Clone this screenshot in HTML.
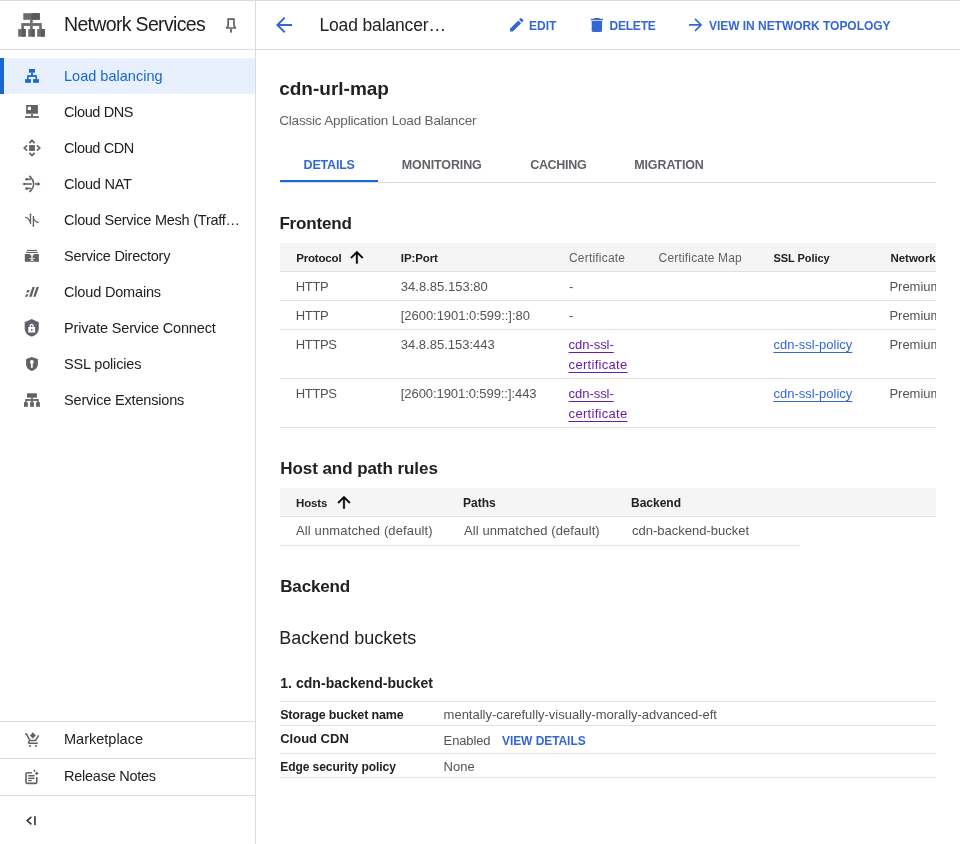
<!DOCTYPE html>
<html><head><meta charset="utf-8"><style>
html,body{margin:0;padding:0;width:960px;height:844px;overflow:hidden;background:#fff;font-family:"Liberation Sans",sans-serif;}
.t{position:absolute;white-space:nowrap;line-height:normal;}
.bm{display:inline-block;width:0;height:0;vertical-align:baseline;}
.a{position:absolute;}
</style></head><body>
<!-- top line -->
<div class="a" style="left:0;top:0;width:960px;height:1px;background:#dadce0"></div>
<!-- header bottom line -->
<div class="a" style="left:0;top:49px;width:960px;height:1px;background:#dadce0"></div>
<!-- sidebar right border -->
<div class="a" style="left:255px;top:0;width:1px;height:844px;background:#dadce0"></div>
<!-- active item -->
<div class="a" style="left:0;top:58px;width:255px;height:36px;background:#e8f0fe"></div>
<div class="a" style="left:0;top:58px;width:4px;height:36px;background:#1967d2"></div>
<!-- bottom sidebar lines -->
<div class="a" style="left:0;top:721px;width:255px;height:1px;background:#dadce0"></div>
<div class="a" style="left:0;top:758px;width:255px;height:1px;background:#dadce0"></div>
<div class="a" style="left:0;top:795px;width:255px;height:1px;background:#dadce0"></div>
<!-- tabs -->
<div class="a" style="left:280px;top:182px;width:656px;height:1px;background:#dadce0"></div>
<div class="a" style="left:280px;top:180px;width:98px;height:2px;background:#1967d2"></div>
<!-- frontend table -->
<div class="a" style="left:280px;top:243px;width:656px;height:28px;background:#f5f5f5"></div>
<div class="a" style="left:280px;top:271px;width:656px;height:1px;background:#e0e0e0"></div>
<div class="a" style="left:280px;top:300px;width:656px;height:1px;background:#e0e0e0"></div>
<div class="a" style="left:280px;top:329px;width:656px;height:1px;background:#e0e0e0"></div>
<div class="a" style="left:280px;top:378px;width:656px;height:1px;background:#e0e0e0"></div>
<div class="a" style="left:280px;top:427px;width:656px;height:1px;background:#e0e0e0"></div>
<!-- host table -->
<div class="a" style="left:280px;top:488px;width:656px;height:28px;background:#f5f5f5"></div>
<div class="a" style="left:280px;top:516px;width:656px;height:1px;background:#e0e0e0"></div>
<div class="a" style="left:280px;top:545px;width:520px;height:1px;background:#e0e0e0"></div>
<!-- backend kv -->
<div class="a" style="left:280px;top:701px;width:656px;height:1px;background:#e0e0e0"></div>
<div class="a" style="left:280px;top:725px;width:656px;height:1px;background:#e0e0e0"></div>
<div class="a" style="left:280px;top:753px;width:656px;height:1px;background:#e0e0e0"></div>
<div class="a" style="left:280px;top:777px;width:656px;height:1px;background:#e0e0e0"></div>

<svg class="a" style="left:0;top:0" width="960" height="844" viewBox="0 0 960 844">
<!-- header network services icon -->
<g fill="#6b6b6b">
<rect x="23.3" y="13.2" width="16.5" height="6.6"/>
<rect x="30.1" y="19.7" width="2.6" height="3.5"/>
<rect x="21.3" y="23.1" width="20.5" height="2.8"/>
<rect x="21.3" y="25.8" width="2.6" height="3.4"/>
<rect x="30.1" y="25.8" width="2.6" height="3.4"/>
<rect x="39.2" y="25.8" width="2.6" height="3.4"/>
<rect x="18.2" y="29.1" width="7.5" height="7.6"/>
<rect x="28.2" y="29.1" width="6.5" height="7.6"/>
<rect x="37.2" y="29.1" width="7.6" height="7.6"/>
</g>
<g fill="#5a5a5a">
<rect x="31.5" y="13.2" width="8.3" height="6.6"/>
<rect x="21.8" y="29.1" width="3.9" height="7.6"/>
<rect x="31.5" y="29.1" width="3.2" height="7.6"/>
<rect x="41" y="29.1" width="3.8" height="7.6"/>
</g>
<!-- pin -->
<path d="M227.3 18.3 H234.8 V25.5 L236.1 27.3 V28.8 H226 V27.3 L227.3 25.5 Z M229 20 V25.9 L228.1 27.2 H234 L233.1 25.9 V20 Z" fill="#5f6368" fill-rule="evenodd"/>
<rect x="230.1" y="28.7" width="1.8" height="3.9" fill="#5f6368"/>
<!-- load balancing (blue) -->
<g fill="#1967d2">
<rect x="29" y="69" width="5.9" height="3.7"/>
<rect x="31.1" y="72.6" width="1.8" height="2.6"/>
<rect x="27.1" y="75.1" width="9.8" height="1.8"/>
<rect x="27.1" y="76.8" width="1.6" height="2.4"/>
<rect x="35.3" y="76.8" width="1.6" height="2.4"/>
<rect x="25.1" y="79.1" width="5.8" height="3.7"/>
<rect x="33.1" y="79.1" width="5.8" height="3.7"/>
</g>
<!-- cloud dns -->
<g fill="#5f6368">
<path d="M26.1 105.1h11.8v8.7H26.1zM27.8 106.8v3.3h3.2v-3.3z" fill-rule="evenodd"/>
<rect x="31.1" y="113.7" width="1.8" height="2.5"/>
<rect x="25.1" y="116.1" width="13.8" height="1.8"/>
</g>
<!-- cloud cdn -->
<g fill="none" stroke="#5f6368" stroke-width="1.7" stroke-linejoin="miter">
<polyline points="29.4,143.1 32,140.3 34.6,143.1"/>
<polyline points="29.4,152.8 32,155.6 34.6,152.8"/>
<polyline points="27.1,145.4 24.3,148 27.1,150.6"/>
<polyline points="36.9,145.4 39.7,148 36.9,150.6"/>
</g>
<rect x="29.1" y="145.1" width="5.8" height="5.8" fill="#5f6368"/>
<!-- cloud nat -->
<g fill="none" stroke="#5f6368" stroke-width="1.6">
<path d="M29.4 175.8 Q 37.9 184 29.4 192"/>
<line x1="24.5" y1="184" x2="31.8" y2="184"/>
<line x1="27" y1="179.2" x2="30.8" y2="179.4"/>
<line x1="27" y1="188.6" x2="30.8" y2="188.3"/>
<line x1="35" y1="184" x2="38.5" y2="184"/>
</g>
<g fill="#5f6368">
<circle cx="24.3" cy="184" r="1.3"/>
<circle cx="26.5" cy="179.2" r="1.3"/>
<circle cx="26.5" cy="188.6" r="1.3"/>
<path d="M37.6 181.8 L40.5 184 L37.6 186.2z"/>
</g>
<!-- cloud service mesh -->
<g fill="none" stroke="#5f6368" stroke-width="1.3">
<line x1="30.5" y1="214" x2="30.5" y2="224.2"/>
<line x1="33.4" y1="216" x2="33.4" y2="226"/>
<path d="M25.2 217.4 Q 28.5 217.6 30.5 222.5"/>
<path d="M33.4 218.3 Q 35.5 222.5 38.7 222.5"/>
</g>
<g fill="#5f6368">
<path d="M29.2 214.8 L30.5 213.2 L31.8 214.8z"/>
<path d="M32.1 225.4 L33.4 227 L34.7 225.4z"/>
</g>
<!-- service directory -->
<g fill="#5f6368">
<rect x="27.1" y="249.9" width="9.8" height="1.1"/>
<rect x="26" y="251.9" width="11.9" height="1.1"/>
<path d="M24.8 254h14.1v7.8H24.8z"/>
</g>
<g fill="#fff" opacity="0.85">
<path d="M29.6 254 h4.8 l-1.6 2 h-1.6z"/>
<rect x="31.3" y="256" width="1.4" height="4.6"/>
<rect x="29.3" y="258" width="5.4" height="0.9"/>
<rect x="30.2" y="260" width="3.6" height="0.8"/>
</g>
<!-- cloud domains -->
<g fill="#5f6368">
<path d="M27.3 290.1 h2.6 l-1.1 2.4 h-2.6z"/>
<path d="M26.2 294.2 h2.2 l-1.1 2.6 h-2.4z"/>
<path d="M32.4 287.1 h2.4 l-3.1 9.7 h-2.6z"/>
<path d="M36.5 287.1 h2.4 l-3.3 9.7 h-2.4z"/>
</g>
<!-- private service connect -->
<path d="M31.7 319 L24.7 322.2 V328.5 C24.7 332.5 27.7 335.7 31.7 336.6 C35.7 335.7 38.8 332.5 38.8 328.5 V322.2z" fill="#5f6368"/>
<g fill="#fff">
<rect x="28.3" y="327.1" width="6.8" height="5.5" rx="0.3"/>
<path d="M29.6 327.4 V325.8 A2.1 2.1 0 0 1 33.8 325.8 V327.4 h-1.3 V325.8 A0.8 0.8 0 0 0 30.9 325.8 V327.4z"/>
</g>
<path d="M31.2 328.6 L33 329.9 L31.2 331.2z" fill="#5f6368"/>
<!-- ssl policies -->
<path d="M31.8 357 L26.1 359.1 V364 C26.1 367.3 28.6 370.1 31.8 370.9 C35 370.1 37.9 367.3 37.9 364 V359.1z" fill="#5f6368"/>
<g fill="#fff">
<circle cx="31.85" cy="362" r="1.9"/>
<rect x="30.95" y="362" width="1.8" height="5.8"/>
</g>
<!-- service extensions -->
<g fill="#5f6368">
<rect x="27" y="393.3" width="9.9" height="4.3"/>
<rect x="31.1" y="397.5" width="1.8" height="2"/>
<rect x="25.1" y="399.1" width="13.7" height="1.8"/>
<rect x="25.1" y="400.8" width="1.7" height="1.5"/>
<rect x="31.1" y="400.8" width="1.8" height="1.5"/>
<rect x="37.1" y="400.8" width="1.7" height="1.5"/>
<rect x="24" y="402.2" width="3.8" height="4.6"/>
<rect x="30.1" y="402.2" width="3.8" height="4.6"/>
<rect x="36.1" y="402.2" width="3.8" height="4.6"/>
</g>
<!-- marketplace -->
<g fill="none" stroke="#5f6368" stroke-width="1.5" stroke-linejoin="round">
<path d="M25.1 734.1 h1.5 l3.1 6.3 h5.9 l3 -5"/>
<path d="M29.4 741 l-0.8 1.2 q-0.5 1 0.6 1 h8.6"/>
</g>
<g fill="#5f6368">
<circle cx="30.1" cy="746" r="1.05"/>
<circle cx="35.9" cy="746" r="1.05"/>
<path d="M32.9 732.3 L35.9 735.4 L32.9 738.5 L29.9 735.4z"/>
</g>
<!-- release notes -->
<g fill="none" stroke="#5f6368" stroke-width="1.6">
<path d="M31.8 772.7 H27.4 q-1.4 0 -1.4 1.4 V782 q0 1.4 1.4 1.4 H35.4 q1.4 0 1.4 -1.4 V777.1"/>
</g>
<g fill="#5f6368">
<rect x="28.2" y="775" width="6.3" height="1.2"/>
<rect x="28.2" y="776.2" width="6.3" height="1.6" opacity="0.45"/>
<rect x="28.2" y="777.9" width="6.3" height="1.2"/>
<rect x="28.2" y="780" width="3.6" height="1.2"/>
<path d="M36.8 771.3 L37.6 772.6 L38.9 773.4 L37.6 774.2 L36.8 775.5 L36 774.2 L34.7 773.4 L36 772.6z"/>
<ellipse cx="34.4" cy="770.7" rx="0.8" ry="1.2"/>
</g>
<!-- collapse -->
<polyline points="31.4,816.8 27.2,820.6 31.4,824.4" fill="none" stroke="#3c4043" stroke-width="1.7"/>
<rect x="34.1" y="816.2" width="1.7" height="8.9" fill="#3c4043"/>
<!-- back arrow -->
<path transform="translate(272,12.9)" d="M20 11H7.83l5.59-5.59L12 4l-8 8 8 8 1.41-1.41L7.83 13H20v-2z" fill="#3367d6"/>
<!-- edit pencil -->
<path transform="translate(507.75,15.75) scale(0.75)" d="M3 17.25V21h3.75L17.81 9.94l-3.75-3.75L3 17.25zM20.71 7.04c.39-.39.39-1.02 0-1.41l-2.34-2.34c-.39-.39-1.02-.39-1.41 0l-1.83 1.83 3.75 3.75 1.83-1.83z" fill="#3367d6"/>
<!-- delete trash -->
<path transform="translate(586.5,15.56) scale(0.864,0.78)" d="M6 19c0 1.1.9 2 2 2h8c1.1 0 2-.9 2-2V7H6v12zM19 4h-3.5l-1-1h-5l-1 1H5v2h14V4z" fill="#3367d6"/>
<!-- forward arrow -->
<path transform="translate(685.6,14.95) scale(0.833)" d="M12 4l-1.41 1.41L16.17 11H4v2h12.17l-5.58 5.59L12 20l8-8z" fill="#3367d6"/>
<!-- sort arrows -->
<path transform="translate(347.4,247.8) scale(0.79)" d="M4 12l1.41 1.41L11 7.83V20h2V7.83l5.58 5.59L20 12l-8-8-8 8z" fill="#000" stroke="#000" stroke-width="0.45"/>
<path transform="translate(334.5,492.8) scale(0.79)" d="M4 12l1.41 1.41L11 7.83V20h2V7.83l5.58 5.59L20 12l-8-8-8 8z" fill="#000" stroke="#000" stroke-width="0.45"/>
</svg>

<div class="a" style="left:0;top:0;width:936px;height:844px;overflow:hidden;will-change:transform">
<span class="t" id="t0" style="left:64.00px;top:13.00px;font-size:19.5px;font-weight:400;color:#202124;letter-spacing:-0.667px;">Network Services<i class="bm"></i></span><span class="t" id="t1" style="left:319.40px;top:15.00px;font-size:17.5px;font-weight:400;color:#202124;letter-spacing:-0.138px;">Load balancer…<i class="bm"></i></span><span class="t" id="t2" style="left:529.00px;top:19.00px;font-size:12px;font-weight:700;color:#3367d6;">EDIT<i class="bm"></i></span><span class="t" id="t3" style="left:609.60px;top:19.00px;font-size:12px;font-weight:700;color:#3367d6;letter-spacing:-0.240px;">DELETE<i class="bm"></i></span><span class="t" id="t4" style="left:709.00px;top:19.00px;font-size:12px;font-weight:700;color:#3367d6;letter-spacing:-0.039px;">VIEW IN NETWORK TOPOLOGY<i class="bm"></i></span><span class="t" id="t5" style="left:64.00px;top:68.00px;font-size:14.5px;font-weight:400;color:#1967d2;letter-spacing:0.015px;">Load balancing<i class="bm"></i></span><span class="t" id="t6" style="left:64.00px;top:104.00px;font-size:14.5px;font-weight:400;color:#202124;letter-spacing:-0.375px;">Cloud DNS<i class="bm"></i></span><span class="t" id="t7" style="left:64.00px;top:140.00px;font-size:14.5px;font-weight:400;color:#202124;letter-spacing:-0.375px;">Cloud CDN<i class="bm"></i></span><span class="t" id="t8" style="left:64.00px;top:176.00px;font-size:14.5px;font-weight:400;color:#202124;letter-spacing:-0.237px;">Cloud NAT<i class="bm"></i></span><span class="t" id="t9" style="left:64.00px;top:212.00px;font-size:14.5px;font-weight:400;color:#202124;letter-spacing:-0.240px;">Cloud Service Mesh (Traff…<i class="bm"></i></span><span class="t" id="t10" style="left:64.00px;top:248.00px;font-size:14.5px;font-weight:400;color:#202124;letter-spacing:-0.250px;">Service Directory<i class="bm"></i></span><span class="t" id="t11" style="left:64.00px;top:284.00px;font-size:14.5px;font-weight:400;color:#202124;letter-spacing:-0.167px;">Cloud Domains<i class="bm"></i></span><span class="t" id="t12" style="left:64.00px;top:320.00px;font-size:14.5px;font-weight:400;color:#202124;letter-spacing:-0.173px;">Private Service Connect<i class="bm"></i></span><span class="t" id="t13" style="left:64.00px;top:356.00px;font-size:14.5px;font-weight:400;color:#202124;letter-spacing:-0.164px;">SSL policies<i class="bm"></i></span><span class="t" id="t14" style="left:64.00px;top:392.00px;font-size:14.5px;font-weight:400;color:#202124;letter-spacing:-0.176px;">Service Extensions<i class="bm"></i></span><span class="t" id="t15" style="left:64.00px;top:731.00px;font-size:14.5px;font-weight:400;color:#202124;">Marketplace<i class="bm"></i></span><span class="t" id="t16" style="left:64.00px;top:768.00px;font-size:14.5px;font-weight:400;color:#202124;letter-spacing:-0.250px;">Release Notes<i class="bm"></i></span><span class="t" id="t17" style="left:279.20px;top:78.00px;font-size:19px;font-weight:700;color:#202124;">cdn-url-map<i class="bm"></i></span><span class="t" id="t18" style="left:279.20px;top:113.00px;font-size:13.5px;font-weight:400;color:#5f6368;letter-spacing:-0.188px;">Classic Application Load Balancer<i class="bm"></i></span><span class="t" id="t19" style="left:303.60px;top:158.00px;font-size:12.5px;font-weight:700;color:#3367d6;letter-spacing:-0.200px;">DETAILS<i class="bm"></i></span><span class="t" id="t20" style="left:401.80px;top:158.00px;font-size:12.5px;font-weight:700;color:#5f6368;letter-spacing:-0.111px;">MONITORING<i class="bm"></i></span><span class="t" id="t21" style="left:530.20px;top:158.00px;font-size:12.5px;font-weight:700;color:#5f6368;letter-spacing:-0.317px;">CACHING<i class="bm"></i></span><span class="t" id="t22" style="left:634.20px;top:158.00px;font-size:12.5px;font-weight:700;color:#5f6368;letter-spacing:-0.112px;">MIGRATION<i class="bm"></i></span><span class="t" id="t23" style="left:279.40px;top:214.00px;font-size:17px;font-weight:700;color:#202124;letter-spacing:-0.171px;">Frontend<i class="bm"></i></span><span class="t" id="t24" style="left:296.20px;top:252.00px;font-size:11.5px;font-weight:700;color:#202124;letter-spacing:-0.171px;">Protocol<i class="bm"></i></span><span class="t" id="t25" style="left:400.80px;top:252.00px;font-size:11.5px;font-weight:700;color:#202124;letter-spacing:-0.100px;">IP:Port<i class="bm"></i></span><span class="t" id="t26" style="left:569.00px;top:251.00px;font-size:12px;font-weight:400;color:#5f6368;letter-spacing:0.200px;">Certificate<i class="bm"></i></span><span class="t" id="t27" style="left:658.60px;top:251.00px;font-size:12px;font-weight:400;color:#5f6368;letter-spacing:0.179px;">Certificate Map<i class="bm"></i></span><span class="t" id="t28" style="left:773.40px;top:252.00px;font-size:11px;font-weight:700;color:#202124;letter-spacing:-0.044px;">SSL Policy<i class="bm"></i></span><span class="t" id="t29" style="left:890.40px;top:252.00px;font-size:11.5px;font-weight:700;color:#202124;">Network<i class="bm"></i></span><span class="t" id="t30" style="left:295.80px;top:279.00px;font-size:13px;font-weight:400;color:#505458;letter-spacing:-0.333px;">HTTP<i class="bm"></i></span><span class="t" id="t31" style="left:295.80px;top:308.00px;font-size:13px;font-weight:400;color:#505458;letter-spacing:-0.333px;">HTTP<i class="bm"></i></span><span class="t" id="t32" style="left:295.80px;top:337.00px;font-size:13px;font-weight:400;color:#505458;letter-spacing:-0.375px;">HTTPS<i class="bm"></i></span><span class="t" id="t33" style="left:295.80px;top:386.00px;font-size:13px;font-weight:400;color:#505458;letter-spacing:-0.375px;">HTTPS<i class="bm"></i></span><span class="t" id="t34" style="left:400.80px;top:279.00px;font-size:13px;font-weight:400;color:#505458;letter-spacing:0.015px;">34.8.85.153:80<i class="bm"></i></span><span class="t" id="t35" style="left:400.80px;top:308.00px;font-size:13px;font-weight:400;color:#505458;letter-spacing:-0.048px;">[2600:1901:0:599::]:80<i class="bm"></i></span><span class="t" id="t36" style="left:400.80px;top:337.00px;font-size:13px;font-weight:400;color:#505458;">34.8.85.153:443<i class="bm"></i></span><span class="t" id="t37" style="left:400.80px;top:386.00px;font-size:13px;font-weight:400;color:#505458;letter-spacing:-0.073px;">[2600:1901:0:599::]:443<i class="bm"></i></span><span class="t" id="t38" style="left:569.00px;top:279.00px;font-size:13px;font-weight:400;color:#505458;">-<i class="bm"></i></span><span class="t" id="t39" style="left:569.00px;top:308.00px;font-size:13px;font-weight:400;color:#505458;">-<i class="bm"></i></span><span class="t" id="t40" style="left:568.60px;top:337.00px;font-size:13px;font-weight:400;color:#681da8;letter-spacing:-0.043px;text-decoration:underline;text-underline-offset:3px">cdn-ssl-<i class="bm"></i></span><span class="t" id="t41" style="left:568.60px;top:357.00px;font-size:13px;font-weight:400;color:#681da8;letter-spacing:0.300px;text-decoration:underline;text-underline-offset:3px">certificate<i class="bm"></i></span><span class="t" id="t42" style="left:773.40px;top:337.00px;font-size:13px;font-weight:400;color:#3367d6;letter-spacing:0.015px;text-decoration:underline;text-underline-offset:3px">cdn-ssl-policy<i class="bm"></i></span><span class="t" id="t43" style="left:568.60px;top:386.00px;font-size:13px;font-weight:400;color:#681da8;letter-spacing:-0.043px;text-decoration:underline;text-underline-offset:3px">cdn-ssl-<i class="bm"></i></span><span class="t" id="t44" style="left:568.60px;top:406.00px;font-size:13px;font-weight:400;color:#681da8;letter-spacing:0.300px;text-decoration:underline;text-underline-offset:3px">certificate<i class="bm"></i></span><span class="t" id="t45" style="left:773.40px;top:386.00px;font-size:13px;font-weight:400;color:#3367d6;letter-spacing:0.015px;text-decoration:underline;text-underline-offset:3px">cdn-ssl-policy<i class="bm"></i></span><span class="t" id="t46" style="left:889.40px;top:279.00px;font-size:13px;font-weight:400;color:#505458;">Premium<i class="bm"></i></span><span class="t" id="t47" style="left:889.40px;top:308.00px;font-size:13px;font-weight:400;color:#505458;">Premium<i class="bm"></i></span><span class="t" id="t48" style="left:889.40px;top:337.00px;font-size:13px;font-weight:400;color:#505458;">Premium<i class="bm"></i></span><span class="t" id="t49" style="left:889.40px;top:386.00px;font-size:13px;font-weight:400;color:#505458;">Premium<i class="bm"></i></span><span class="t" id="t50" style="left:280.20px;top:459.00px;font-size:17px;font-weight:700;color:#202124;letter-spacing:-0.056px;">Host and path rules<i class="bm"></i></span><span class="t" id="t51" style="left:296.00px;top:497.00px;font-size:11.5px;font-weight:700;color:#202124;letter-spacing:-0.125px;">Hosts<i class="bm"></i></span><span class="t" id="t52" style="left:463.00px;top:496.00px;font-size:12px;font-weight:700;color:#202124;">Paths<i class="bm"></i></span><span class="t" id="t53" style="left:631.00px;top:496.00px;font-size:12px;font-weight:700;color:#202124;">Backend<i class="bm"></i></span><span class="t" id="t54" style="left:296.00px;top:523.40px;font-size:13px;font-weight:400;color:#505458;letter-spacing:0.136px;">All unmatched (default)<i class="bm"></i></span><span class="t" id="t55" style="left:464.00px;top:523.40px;font-size:13px;font-weight:400;color:#505458;letter-spacing:0.091px;">All unmatched (default)<i class="bm"></i></span><span class="t" id="t56" style="left:632.00px;top:523.40px;font-size:13px;font-weight:400;color:#505458;">cdn-backend-bucket<i class="bm"></i></span><span class="t" id="t57" style="left:280.20px;top:577.00px;font-size:17px;font-weight:700;color:#202124;letter-spacing:-0.133px;">Backend<i class="bm"></i></span><span class="t" id="t58" style="left:279.20px;top:628.00px;font-size:18px;font-weight:400;color:#202124;">Backend buckets<i class="bm"></i></span><span class="t" id="t59" style="left:280.20px;top:675.00px;font-size:14px;font-weight:700;color:#202124;letter-spacing:0.050px;">1. cdn-backend-bucket<i class="bm"></i></span><span class="t" id="t60" style="left:280.20px;top:708.00px;font-size:12.5px;font-weight:700;color:#202124;letter-spacing:-0.167px;">Storage bucket name<i class="bm"></i></span><span class="t" id="t61" style="left:280.20px;top:731.00px;font-size:13px;font-weight:700;color:#202124;">Cloud CDN<i class="bm"></i></span><span class="t" id="t62" style="left:280.20px;top:760.00px;font-size:12px;font-weight:700;color:#202124;letter-spacing:-0.053px;">Edge security policy<i class="bm"></i></span><span class="t" id="t63" style="left:443.60px;top:707.00px;font-size:13px;font-weight:400;color:#505458;letter-spacing:-0.011px;">mentally-carefully-visually-morally-advanced-eft<i class="bm"></i></span><span class="t" id="t64" style="left:443.60px;top:733.00px;font-size:13px;font-weight:400;color:#505458;letter-spacing:-0.133px;">Enabled<i class="bm"></i></span><span class="t" id="t65" style="left:502.00px;top:734.00px;font-size:12px;font-weight:700;color:#3367d6;letter-spacing:-0.073px;">VIEW DETAILS<i class="bm"></i></span><span class="t" id="t66" style="left:443.60px;top:759.00px;font-size:13px;font-weight:400;color:#505458;">None<i class="bm"></i></span>
</div>
</body></html>
